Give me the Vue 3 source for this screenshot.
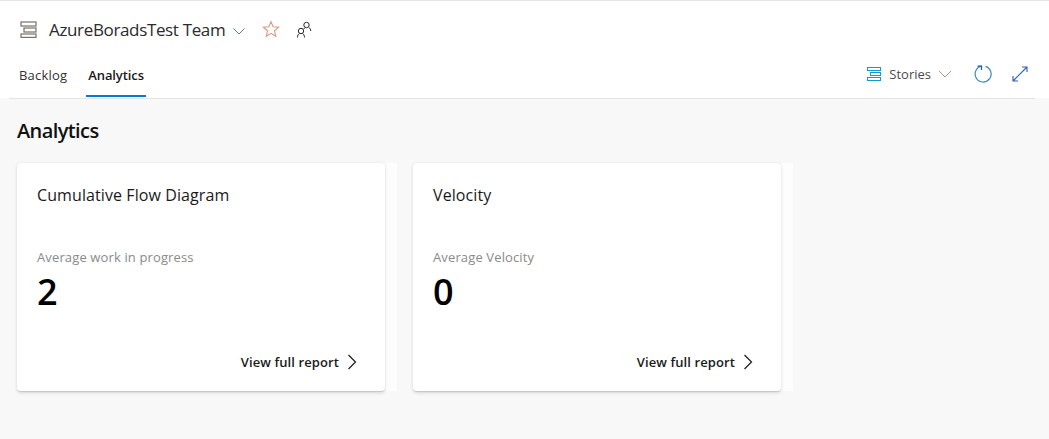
<template>
  <div class="page">
    <!-- HEADER -->
    <header class="header">
      <div class="title-row">
        <svg class="board-icon" width="17" height="17" viewBox="0 0 17 17" fill="none" stroke="#77716c" stroke-width="1.2">
          <rect x="1" y="1" width="15" height="4" />
          <rect x="4" y="7" width="12" height="4" />
          <rect x="1" y="13" width="15" height="3.400" />
        </svg>
        <span class="team">AzureBoradsTest Team</span>
        <svg class="team-chevron" width="14" height="14" viewBox="0 0 14 14" fill="none" stroke="#6a7280" stroke-width="1">
          <path d="M1.500 4.500 7 10l5.500-5.500" />
        </svg>
        <svg class="star" width="18" height="18" viewBox="0 0 18 18" fill="none" stroke="#dd9a7c" stroke-width="1.100">
          <path d="M9 1.600l2.100 5.200 5.600.4-4.300 3.600 1.400 5.500L9 13.300l-4.800 3 1.400-5.500L1.300 7.200l5.600-.4z" />
        </svg>
        <svg class="people" width="16" height="17" viewBox="0 0 16 17" fill="none" stroke="#2b2b2b" stroke-width="1">
          <circle cx="5" cy="10" r="2.700" />
          <path d="M1.500 16.500c0-1.900.7-3.200 1.800-4M8.500 16.500c0-1.900-.7-3.200-1.800-4" />
          <circle cx="10.500" cy="4" r="2.700" />
          <path d="M7.800 7.800c.4-.6 1-1.100 1.500-1.300M14.800 10c0-1.600-.8-2.900-2.100-3.600" />
        </svg>
      </div>
      <div class="nav-row">
        <nav class="tabs">
          <a class="tab">Backlog</a>
          <a class="tab active">Analytics</a>
        </nav>
        <div class="tools">
          <svg width="16" height="16" viewBox="0 0 16 16" fill="none" stroke="#0f9bd0" stroke-width="1">
            <rect x="1.500" y="1.500" width="13" height="3" />
            <rect x="4.500" y="6.500" width="10" height="3" />
            <rect x="1.500" y="11.500" width="13" height="3" />
          </svg>
          <span class="stories">Stories</span>
          <svg class="stories-chevron" width="14" height="14" viewBox="0 0 14 14" fill="none" stroke="#b98f88" stroke-width="1">
            <path d="M1 4 7 10l6-6" />
          </svg>
          <svg class="refresh" width="18" height="18" viewBox="0 0 18 18" fill="none" stroke="#3a86c4" stroke-width="1.200">
            <path d="M11.500 1.400A8 8 0 1 1 7.500 1.200" />
            <path d="M3.500 1.200H7.500V5" stroke="#1f5a9c" />
          </svg>
          <svg class="expand" width="16" height="16" viewBox="0 0 16 16" fill="none" stroke="#2a62b0" stroke-width="1.100">
            <path d="M1 15 15 1M10 1H15v5M1 10V15h5" />
          </svg>
        </div>
      </div>
    </header>

    <!-- CONTENT -->
    <main class="content">
      <h1>Analytics</h1>
      <div class="cards">
        <div v-for="card in cards" :key="card.title" class="card-wrap">
          <section class="card">
            <h2>{{ card.title }}</h2>
            <div class="label">{{ card.label }}</div>
            <div class="value">{{ card.value }}</div>
            <a class="report">
              View full report
              <svg width="10" height="16" viewBox="0 0 10 16" fill="none" stroke="#222" stroke-width="1.300">
                <path d="M1.500 1 8.500 8l-7 7" />
              </svg>
            </a>
          </section>
        </div>
      </div>
    </main>
  </div>
</template>

<script setup>
const cards = [
  { title: 'Cumulative Flow Diagram', label: 'Average work in progress', value: 2 },
  { title: 'Velocity', label: 'Average Velocity', value: 0 }
]
</script>

<style>
html, body {
  margin: 0;
  background: #f8f8f8;
}
</style>

<style scoped>
.page {
  width: 1049px;
  height: 439px;
  overflow: hidden;
  background: #f8f8f8;
  font-family: "Open Sans", "Noto Sans", sans-serif;
  color: #1a1a1a;
}

.header {
  height: 98px;
  box-sizing: border-box;
  background: #fff;
  border-top: 1px solid #e6e6e6;
  padding-left: 9px;
  padding-right: 14px;
}

.title-row {
  display: flex;
  align-items: center;
  height: 56px;
  padding-left: 11px;
}

.team {
  margin-left: 12px;
  font-size: 17px;
  letter-spacing: -0.35px;
  color: #2b2b2b;
}

.team-chevron {
  margin-left: 7px;
  margin-top: 3px;
}

.star {
  margin-left: 16px;
}

.people {
  margin-left: 16px;
}

.nav-row {
  display: flex;
  justify-content: space-between;
  align-items: flex-start;
  height: 42px;
  box-sizing: border-box;
  border-bottom: 1px solid #e4e4e4;
}

.tabs {
  display: flex;
  gap: 17px;
  padding-left: 8px;
}

.tab {
  display: block;
  height: 40px;
  box-sizing: border-box;
  padding: 9px 2px 0;
  font-size: 13px;
  letter-spacing: 0.2px;
  color: #333;
}

.tab.active {
  font-weight: 600;
  letter-spacing: -0.1px;
  color: #1a1a1a;
  border-bottom: 2px solid #0a78d0;
}

.tools {
  display: flex;
  align-items: center;
  height: 34px;
  padding-right: 7px;
}

.stories {
  margin-left: 7px;
  font-size: 13px;
  letter-spacing: 0;
  color: #4a4a4a;
}

.stories-chevron {
  margin-left: 7px;
}

.refresh {
  margin-left: 22px;
}

.expand {
  margin-left: 20px;
}

.content {
  padding: 0 17px;
}

h1 {
  margin: 0;
  padding-top: 19px;
  height: 46px;
  font-size: 20px;
  line-height: 28px;
  font-weight: 600;
  letter-spacing: -0.6px;
  color: #111;
}

.cards {
  display: flex;
  gap: 16px;
}

.card-wrap {
  width: 380px;
  height: 228px;
  background: #fdfdfd;
}

.card {
  position: relative;
  width: 368px;
  height: 228px;
  box-sizing: border-box;
  padding: 20px;
  background: #fff;
  border-radius: 4px;
  box-shadow: 0 1.600px 3.600px rgba(0, 0, 0, 0.132), 0 0.300px 0.900px rgba(0, 0, 0, 0.108);
}

h2 {
  margin: 0;
  font-size: 16px;
  line-height: 24px;
  font-weight: 400;
  letter-spacing: 0.09px;
  color: #1a1a1a;
}

.label {
  margin-top: 40px;
  font-size: 13px;
  line-height: 20px;
  letter-spacing: 0.13px;
  color: #8a8a8a;
}

.value {
  margin-top: 1px;
  font-size: 36px;
  line-height: 48px;
  font-weight: 600;
  letter-spacing: -1px;
  color: #000;
}

.report {
  position: absolute;
  right: 28px;
  bottom: 20px;
  display: flex;
  align-items: center;
  gap: 8px;
  font-size: 13px;
  font-weight: 600;
  letter-spacing: 0.1px;
  color: #1a1a1a;
}
</style>
